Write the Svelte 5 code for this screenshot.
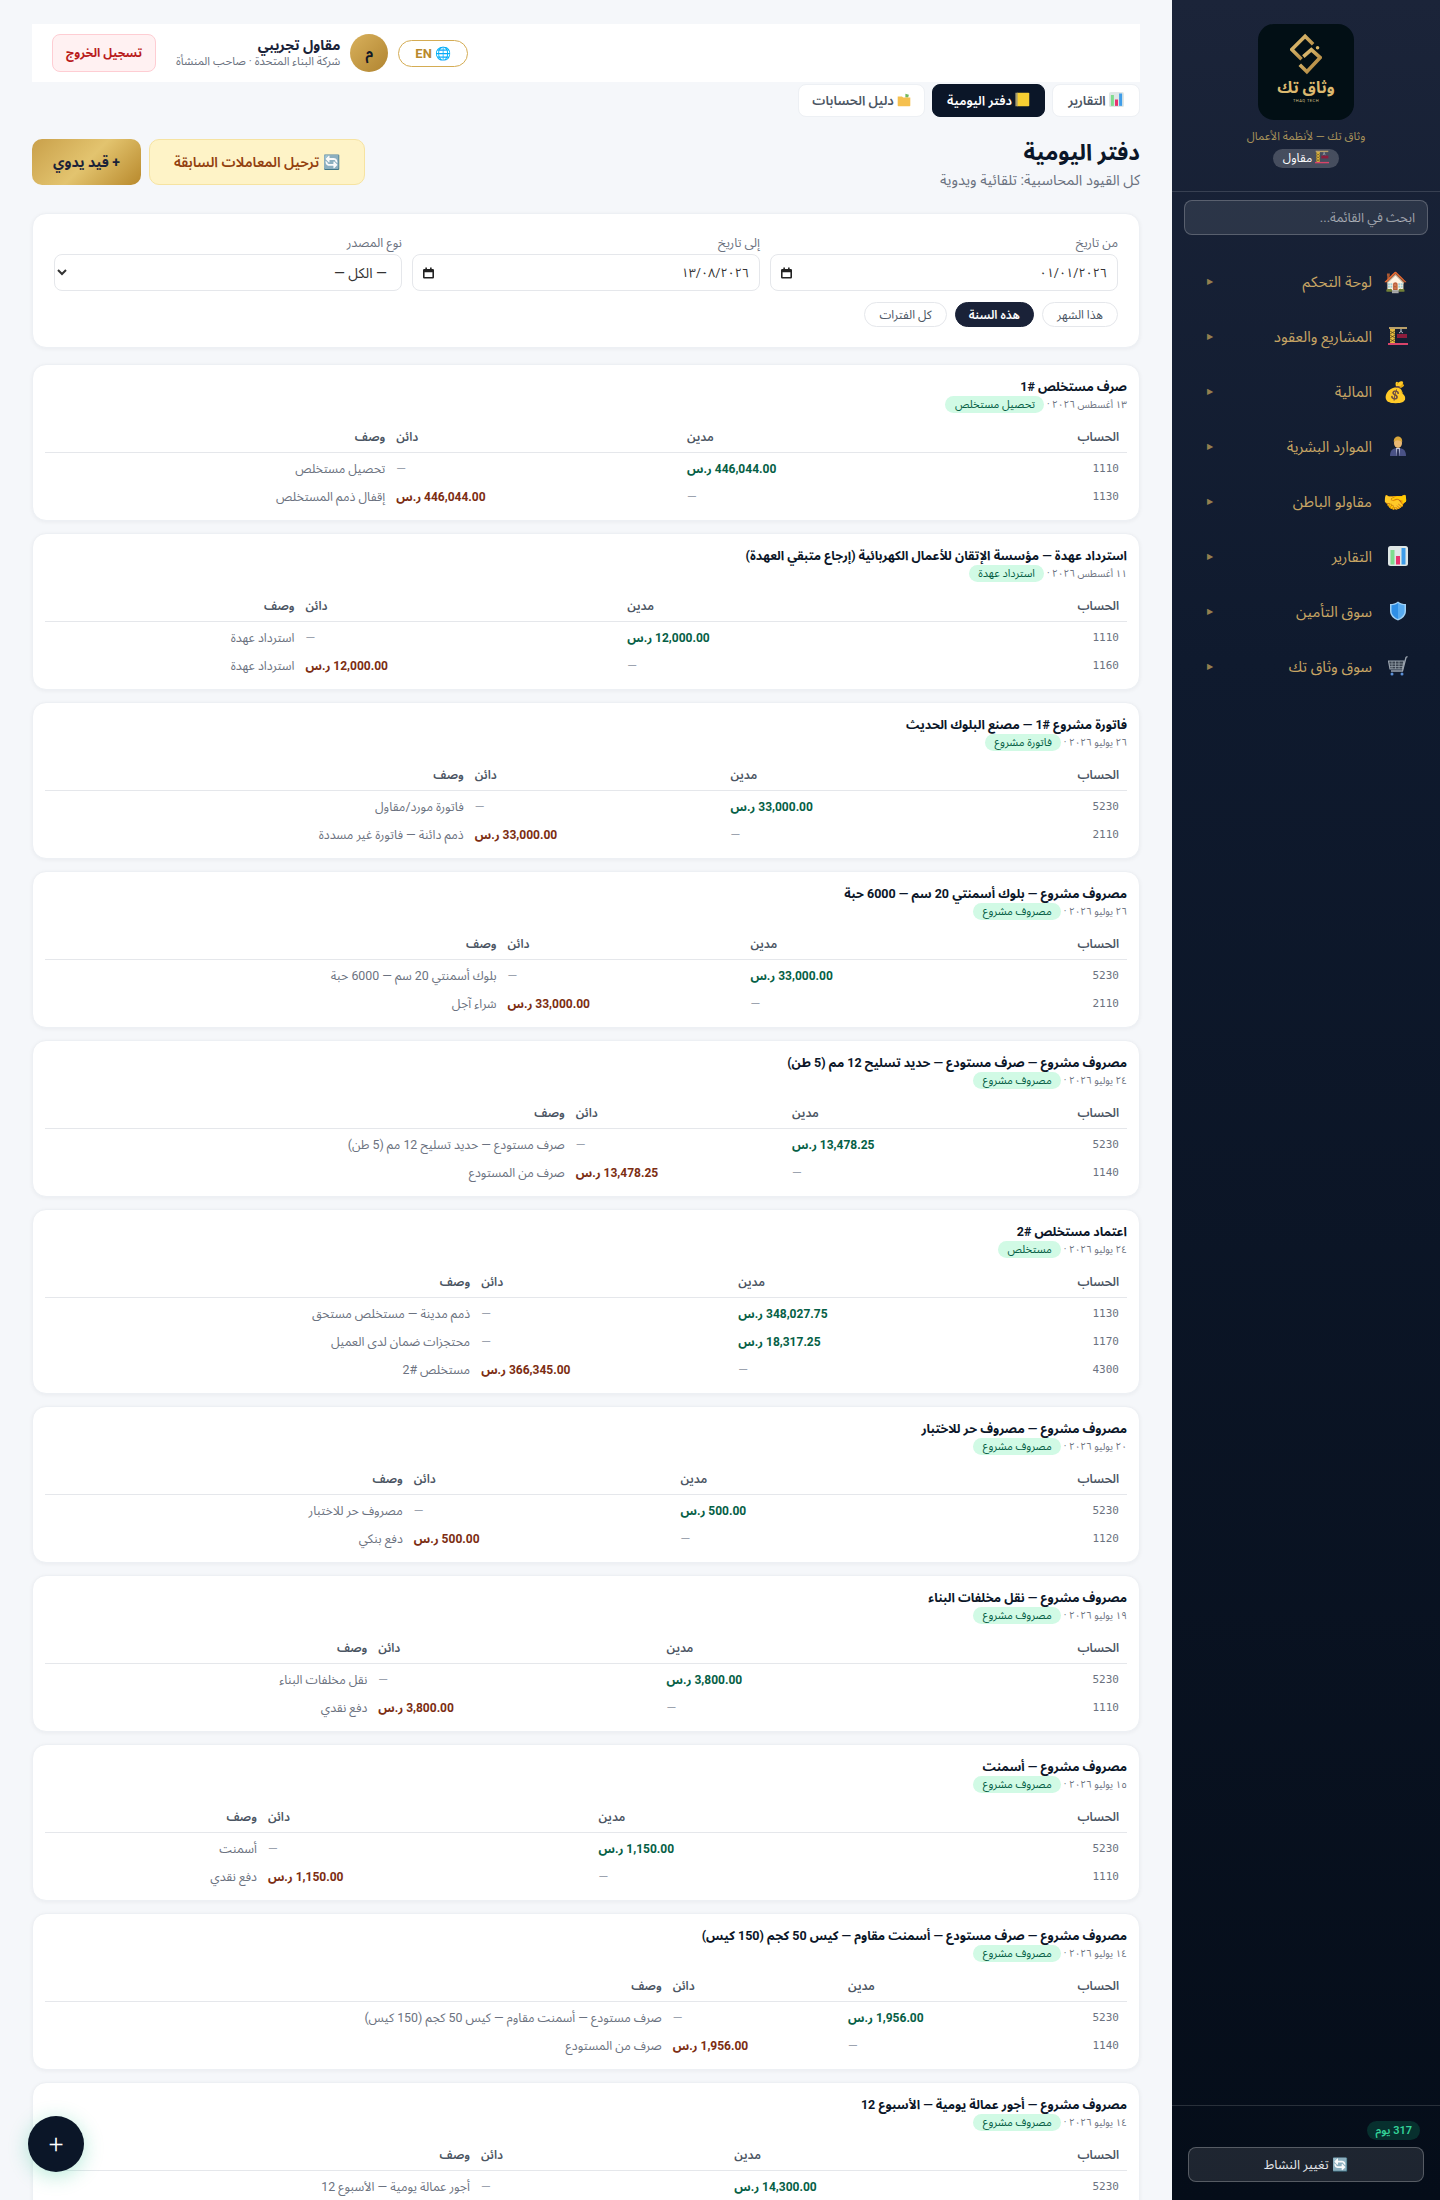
<script lang="ts">
  type Line = { acc: string; dr?: string; cr?: string; desc: string };
  type Entry = { title: string; date: string; tag: string; lines: Line[] };

  const nav = [
    ["🏠", "لوحة التحكم"],
    ["crane", "المشاريع والعقود"],
    ["💰", "المالية"],
    ["person", "الموارد البشرية"],
    ["🤝", "مقاولو الباطن"],
    ["chart", "التقارير"],
    ["shield", "سوق التأمين"],
    ["cart", "سوق وثاق تك"],
  ];

  const exp = "مصروف مشروع";
  const entries: Entry[] = [
    { title: "صرف مستخلص #1", date: "١٣ أغسطس ٢٠٢٦", tag: "تحصيل مستخلص", lines: [
      { acc: "1110", dr: "446,044.00", desc: "تحصيل مستخلص" },
      { acc: "1130", cr: "446,044.00", desc: "إقفال ذمم المستخلص" },
    ] },
    { title: "استرداد عهدة — مؤسسة الإتقان للأعمال الكهربائية (إرجاع متبقي العهدة)", date: "١١ أغسطس ٢٠٢٦", tag: "استرداد عهدة", lines: [
      { acc: "1110", dr: "12,000.00", desc: "استرداد عهدة" },
      { acc: "1160", cr: "12,000.00", desc: "استرداد عهدة" },
    ] },
    { title: "فاتورة مشروع #1 — مصنع البلوك الحديث", date: "٢٦ يوليو ٢٠٢٦", tag: "فاتورة مشروع", lines: [
      { acc: "5230", dr: "33,000.00", desc: "فاتورة مورد/مقاول" },
      { acc: "2110", cr: "33,000.00", desc: "ذمم دائنة — فاتورة غير مسددة" },
    ] },
    { title: "مصروف مشروع — بلوك أسمنتي 20 سم — 6000 حبة", date: "٢٦ يوليو ٢٠٢٦", tag: exp, lines: [
      { acc: "5230", dr: "33,000.00", desc: "بلوك أسمنتي 20 سم — 6000 حبة" },
      { acc: "2110", cr: "33,000.00", desc: "شراء آجل" },
    ] },
    { title: "مصروف مشروع — صرف مستودع — حديد تسليح 12 مم (5 طن)", date: "٢٤ يوليو ٢٠٢٦", tag: exp, lines: [
      { acc: "5230", dr: "13,478.25", desc: "صرف مستودع — حديد تسليح 12 مم (5 طن)" },
      { acc: "1140", cr: "13,478.25", desc: "صرف من المستودع" },
    ] },
    { title: "اعتماد مستخلص #2", date: "٢٤ يوليو ٢٠٢٦", tag: "مستخلص", lines: [
      { acc: "1130", dr: "348,027.75", desc: "ذمم مدينة — مستخلص مستحق" },
      { acc: "1170", dr: "18,317.25", desc: "محتجزات ضمان لدى العميل" },
      { acc: "4300", cr: "366,345.00", desc: "مستخلص #2" },
    ] },
    { title: "مصروف مشروع — مصروف حر للاختبار", date: "٢٠ يوليو ٢٠٢٦", tag: exp, lines: [
      { acc: "5230", dr: "500.00", desc: "مصروف حر للاختبار" },
      { acc: "1120", cr: "500.00", desc: "دفع بنكي" },
    ] },
    { title: "مصروف مشروع — نقل مخلفات البناء", date: "١٩ يوليو ٢٠٢٦", tag: exp, lines: [
      { acc: "5230", dr: "3,800.00", desc: "نقل مخلفات البناء" },
      { acc: "1110", cr: "3,800.00", desc: "دفع نقدي" },
    ] },
    { title: "مصروف مشروع — أسمنت", date: "١٥ يوليو ٢٠٢٦", tag: exp, lines: [
      { acc: "5230", dr: "1,150.00", desc: "أسمنت" },
      { acc: "1110", cr: "1,150.00", desc: "دفع نقدي" },
    ] },
    { title: "مصروف مشروع — صرف مستودع — أسمنت مقاوم — كيس 50 كجم (150 كيس)", date: "١٤ يوليو ٢٠٢٦", tag: exp, lines: [
      { acc: "5230", dr: "1,956.00", desc: "صرف مستودع — أسمنت مقاوم — كيس 50 كجم (150 كيس)" },
      { acc: "1140", cr: "1,956.00", desc: "صرف من المستودع" },
    ] },
    { title: "مصروف مشروع — أجور عمالة يومية — الأسبوع 12", date: "١٤ يوليو ٢٠٢٦", tag: exp, lines: [
      { acc: "5230", dr: "14,300.00", desc: "أجور عمالة يومية — الأسبوع 12" },
      { acc: "1110", cr: "14,300.00", desc: "دفع نقدي" },
    ] },
  ];
</script>

{#snippet ico(name: string, size: number)}
  {#if name === "crane"}
    <svg class="ico" width={size} height={size} viewBox="0 0 20 20">
      <rect x="1" y="1" width="18" height="2" fill="#b9a06a" />
      <rect x="2" y="3" width="5" height="14" fill="#e3b93f" />
      <path d="M2 5l5 3M7 5l-5 3M2 9l5 3M7 9l-5 3M2 13l5 3M7 13l-5 3" stroke="#5c4a1e" stroke-width="0.8" />
      <path d="M13 3v3" stroke="#aeb4bc" stroke-width="1.2" />
      <path d="M11 7l2-1.500 2 1.500" stroke="#aeb4bc" fill="none" />
      <rect x="9" y="8" width="10" height="4" fill="#8e1d3c" />
      <rect x="0" y="17" width="20" height="2" fill="#d9446a" />
    </svg>
  {:else if name === "person"}
    <svg class="ico" width={size} height={size} viewBox="0 0 20 20">
      <path d="M2 20c0-6 3-8 8-8s8 2 8 8z" fill="#4a5286" />
      <path d="M8 12h4l-.8 8H8.800z" fill="#c7cbe0" />
      <path d="M9.200 13h1.600l.4 7H8.800z" fill="#2b3157" />
      <ellipse cx="10" cy="7" rx="4" ry="5" fill="#e9b872" />
      <path d="M5.800 6C5.500 2 8 0.500 10 0.500S14.500 2 14.200 6C13 4.500 11 4.500 9.500 4.200 8 4.500 6.500 4.500 5.800 6z" fill="#d9a63b" />
    </svg>
  {:else if name === "chart"}
    <svg class="ico" width={size} height={size} viewBox="0 0 20 20">
      <rect width="20" height="20" rx="2.500" fill="#dfe7e6" />
      <rect x="2.500" y="4" width="4" height="14.500" fill="#7fdc8e" />
      <rect x="8" y="10" width="4" height="8.500" fill="#e8336f" />
      <rect x="13.500" y="2" width="4" height="16.500" fill="#3f9de9" />
    </svg>
  {:else if name === "shield"}
    <svg class="ico" width={size} height={size} viewBox="0 0 20 20">
      <path d="M10 0.500C7.500 2.500 5 3 2 3v7c0 4.500 3.500 8 8 9.500 4.500-1.500 8-5 8-9.500V3c-3 0-5.500-.5-8-2.500z" fill="#9fd0f5" />
      <path d="M10 2C8 3.500 5.500 4.200 3.500 4.200V10c0 3.800 3 6.500 6.500 8z" fill="#2f8fe6" />
      <path d="M10 2c2 1.500 4.500 2.200 6.500 2.200V10c0 3.800-3 6.500-6.500 8z" fill="#58abf0" />
    </svg>
  {:else if name === "cart"}
    <svg class="ico" width={size} height={size} viewBox="0 0 20 20" fill="none" stroke="#9aa3ae">
      <path d="M0.500 5h15.500l-1.500 8H2z" fill="#39424f" stroke-width="1.200" />
      <path d="M4 5v8M7.500 5v8M11 5v8M1 8h14.500M1.500 10.500h13.500" stroke-width="0.700" />
      <path d="M19.500 0.500l-1.500 1-3.500 13.500H3" stroke-width="1.300" />
      <circle cx="4" cy="18" r="1.500" fill="#5b8fd6" stroke="none" />
      <circle cx="14" cy="18" r="1.500" fill="#5b8fd6" stroke="none" />
    </svg>
  {:else if name === "note"}
    <svg class="ico" width={size} height={size} viewBox="0 0 20 20">
      <rect x="2" y="1" width="17" height="18" rx="1" fill="#f8cf32" />
      <rect x="0.500" y="1" width="3" height="18" fill="#a59b6f" />
    </svg>
  {:else if name === "folder"}
    <svg class="ico" width={size} height={size} viewBox="0 0 20 20">
      <path d="M12 1l5 1.500-1 4h-4z" fill="#76b85b" />
      <path d="M1 5h6l2 1.500h10V18a1 1 0 0 1-1 1H2a1 1 0 0 1-1-1z" fill="#f5c04f" />
    </svg>
  {:else}
    <span>{name}</span>
  {/if}
{/snippet}

<div class="app" dir="rtl">
  <aside class="side">
    <div class="brand">
      <div class="logo">
        <svg width="32" height="42" viewBox="0 0 36 44" fill="none" stroke="url(#g)" stroke-width="4">
          <defs>
            <linearGradient id="g" x1="0" y1="0" x2="1" y2="1">
              <stop offset="0" stop-color="#e6c67a" />
              <stop offset="1" stop-color="#a87c35" />
            </linearGradient>
          </defs>
          <path d="M26 11 L17 2 L2 17 L13 28" />
          <path d="M11 34 L19 42 L34 26 L24 17 L15 25" />
          <circle cx="31" cy="15" r="2" fill="#d9b566" stroke="none" />
        </svg>
        <span class="logo-name">وثاق تك</span>
        <span class="logo-en">THAQ TECH</span>
      </div>
      <div class="tagline">وثاق تك — لأنظمة الأعمال</div>
      <div class="role">{@render ico("crane", 14)} مقاول</div>
    </div>
    <div class="search-wrap"><input class="search" placeholder="ابحث في القائمة..." /></div>
    <nav class="nav">
      {#each nav as [icon, label]}
        <div class="nav-item">
          <span class="nav-icon">{@render ico(icon, 20)}</span>
          <span class="nav-label">{label}</span>
          <span class="nav-arrow">▶</span>
        </div>
      {/each}
    </nav>
    <div class="side-foot">
      <div class="days-row"><span class="days">317 يوم</span></div>
      <button class="switch">🔄 تغيير النشاط</button>
    </div>
  </aside>

  <main class="main">
    <header class="topbar">
      <button class="lang">🌐 EN</button>
      <div class="avatar">م</div>
      <div class="who">
        <div class="who-name">مقاول تجريبي</div>
        <div class="who-sub">شركة البناء المتحدة · صاحب المنشأة</div>
      </div>
      <button class="logout">تسجيل الخروج</button>
    </header>

    <div class="tabs">
      <button class="tab">{@render ico("chart", 15)} التقارير</button>
      <button class="tab active">{@render ico("note", 15)} دفتر اليومية</button>
      <button class="tab narrow">{@render ico("folder", 14)} دليل الحسابات</button>
    </div>

    <div class="page-head">
      <div>
        <h1>دفتر اليومية</h1>
        <p>كل القيود المحاسبية: تلقائية ويدوية</p>
      </div>
      <div class="actions">
        <button class="btn-soft">🔄 ترحيل المعاملات السابقة</button>
        <button class="btn-gold">+ قيد يدوي</button>
      </div>
    </div>

    <section class="card filters">
      <div class="filter-grid">
        <div class="field">
          <span class="flabel">من تاريخ</span>
          <div class="input">
            <span class="date">٠١/٠١/٢٠٢٦</span>
            <svg width="11" height="12" viewBox="0 0 14 14"><path d="M3 0h2v2h4V0h2v2h1.5A1.5 1.5 0 0 1 14 3.5v9a1.5 1.5 0 0 1-1.5 1.5h-11A1.5 1.5 0 0 1 0 12.500v-9A1.500 1.500 0 0 1 1.500 2H3zM2 6v6h10V6z" fill="#222" /></svg>
          </div>
        </div>
        <div class="field">
          <span class="flabel">إلى تاريخ</span>
          <div class="input">
            <span class="date">١٣/٠٨/٢٠٢٦</span>
            <svg width="11" height="12" viewBox="0 0 14 14"><path d="M3 0h2v2h4V0h2v2h1.5A1.5 1.5 0 0 1 14 3.5v9a1.5 1.5 0 0 1-1.5 1.5h-11A1.5 1.5 0 0 1 0 12.500v-9A1.500 1.500 0 0 1 1.500 2H3zM2 6v6h10V6z" fill="#222" /></svg>
          </div>
        </div>
        <div class="field">
          <span class="flabel">نوع المصدر</span>
          <select class="input"><option>— الكل —</option></select>
        </div>
      </div>
      <div class="chips">
        <button class="chip">هذا الشهر</button>
        <button class="chip on">هذه السنة</button>
        <button class="chip">كل الفترات</button>
      </div>
    </section>

    {#each entries as e}
      <section class="card entry">
        <div class="e-title">{e.title}</div>
        <div class="e-sub">{e.date} · <span class="tag">{e.tag}</span></div>
        <table>
          <thead>
            <tr><th>الحساب</th><th class="num">مدين</th><th class="num">دائن</th><th>وصف</th></tr>
          </thead>
          <tbody>
            {#each e.lines as l}
              <tr>
                <td class="acc">{l.acc}</td>
                <td class="num">{#if l.dr}<b class="dr">{l.dr} ر.س</b>{:else}<span class="dash">—</span>{/if}</td>
                <td class="num">{#if l.cr}<b class="cr">{l.cr} ر.س</b>{:else}<span class="dash">—</span>{/if}</td>
                <td>{l.desc}</td>
              </tr>
            {/each}
          </tbody>
        </table>
      </section>
    {/each}
  </main>

  <button class="fab">+</button>
</div>

<style>
  :global(body) {
    margin: 0;
    background: #f5f7fa;
    font-family: Roboto, "Noto Sans Arabic", sans-serif;
  }
  button, input, select {
    font-family: inherit;
  }
  .ico {
    display: inline-block;
    vertical-align: -2px;
  }
  .app {
    display: flex;
    height: 100vh;
    overflow: hidden;
    position: relative;
  }
  .side {
    width: 268px;
    flex: none;
    display: flex;
    flex-direction: column;
    background: linear-gradient(180deg, #1b2439 0%, #0f1a2e 30%, #050d19 100%);
  }
  .brand {
    padding: 24px 0;
    height: 192px;
    box-sizing: border-box;
    border-bottom: 1px solid rgba(255, 255, 255, 0.14);
    display: flex;
    flex-direction: column;
    align-items: center;
  }
  .logo {
    width: 96px;
    height: 96px;
    flex: none;
    border-radius: 16px;
    background: #020f15;
    display: flex;
    flex-direction: column;
    align-items: center;
    padding-top: 9px;
    box-sizing: border-box;
  }
  .logo-name {
    font-size: 16px;
    line-height: 20px;
    font-weight: 700;
    color: #dcb96f;
    margin-top: 3px;
  }
  .logo-en {
    font-size: 4px;
    line-height: 6px;
    letter-spacing: 0.5px;
    color: #d8c08a;
  }
  .tagline {
    margin-top: 8px;
    font-size: 11.5px;
    line-height: 16px;
    color: #a8925a;
  }
  .role {
    margin-top: 5px;
    height: 19px;
    line-height: 19px;
    padding: 0 10px;
    border-radius: 10px;
    background: rgba(255, 255, 255, 0.2);
    color: #fff;
    font-size: 12px;
  }
  .search-wrap {
    padding: 8px 12px;
  }
  .search {
    display: block;
    width: 100%;
    box-sizing: border-box;
    height: 35px;
    padding: 0 12px;
    border-radius: 8px;
    border: 1px solid rgba(255, 255, 255, 0.22);
    background: rgba(255, 255, 255, 0.09);
    font-size: 13px;
    color: #fff;
  }
  .search::placeholder {
    color: rgba(255, 255, 255, 0.55);
  }
  .nav {
    flex: 1;
    padding-top: 11px;
  }
  .nav-item {
    height: 55px;
    display: flex;
    align-items: center;
    padding: 0 32px 0 35px;
    gap: 16px;
    color: #c7a564;
    font-size: 15px;
  }
  .nav-icon {
    width: 20px;
    font-size: 20px;
    line-height: 20px;
    text-align: center;
  }
  .nav-label {
    flex: 1;
  }
  .nav-arrow {
    font-size: 8px;
    color: #94804f;
  }
  .side-foot {
    border-top: 1px solid rgba(255, 255, 255, 0.14);
    padding: 15px 16px 18px;
  }
  .days-row {
    display: flex;
    padding-right: 4px;
    margin-bottom: 7px;
  }
  .days {
    padding: 0 8px;
    height: 19px;
    line-height: 19px;
    border-radius: 10px;
    background: rgba(16, 185, 129, 0.2);
    color: #34d399;
    font-size: 11px;
    font-weight: 600;
  }
  .switch {
    width: 100%;
    height: 35px;
    border-radius: 8px;
    border: 1px solid rgba(255, 255, 255, 0.25);
    background: rgba(255, 255, 255, 0.1);
    color: #e5e7eb;
    font-size: 13px;
  }
  .main {
    flex: 1;
    min-width: 0;
    padding: 24px 32px 0;
    overflow: hidden;
  }
  .topbar {
    height: 58px;
    background: #fff;
    display: flex;
    align-items: center;
    justify-content: flex-end;
    padding: 0 20px;
    gap: 10px;
    box-sizing: border-box;
  }
  .lang {
    height: 27px;
    padding: 0 16px;
    border: 1px solid #d4ac54;
    border-radius: 14px;
    background: #fff;
    color: #b8892c;
    font-weight: 700;
    font-size: 13px;
  }
  .avatar {
    width: 38px;
    height: 38px;
    border-radius: 50%;
    background: linear-gradient(135deg, #d9b15c, #b08430);
    color: #111827;
    font-weight: 700;
    font-size: 14px;
    display: flex;
    align-items: center;
    justify-content: center;
  }
  .who {
    margin-left: 10px;
  }
  .who-name {
    font-size: 14px;
    font-weight: 700;
    color: #1a2238;
    line-height: 17px;
  }
  .who-sub {
    font-size: 11.5px;
    color: #6b7280;
    line-height: 15px;
  }
  .logout {
    height: 38px;
    width: 104px;
    padding: 0;
    border-radius: 8px;
    border: 1px solid #fecdd3;
    background: #fff1f2;
    color: #b91c1c;
    font-weight: 700;
    font-size: 12px;
  }
  .tabs {
    display: flex;
    gap: 7px;
    margin-top: 2px;
  }
  .tab {
    height: 33px;
    padding: 0 15px;
    border-radius: 8px;
    border: 1px solid #edf0f4;
    background: #fff;
    color: #4b5563;
    font-size: 13px;
    font-weight: 600;
  }
  .tab.narrow {
    padding: 0 13px;
  }
  .tab.active {
    padding: 0 14px;
    background: #0b1628;
    color: #fff;
    border-color: #0b1628;
  }
  .page-head {
    display: flex;
    justify-content: space-between;
    align-items: flex-start;
    margin-top: 22px;
    height: 74px;
  }
  h1 {
    margin: 0;
    font-size: 22.5px;
    line-height: 26px;
    color: #0b1628;
    font-weight: 700;
  }
  .page-head p {
    margin: 6px 0 0;
    font-size: 14.6px;
    line-height: 18px;
    color: #6b7280;
  }
  .actions {
    display: flex;
    gap: 8px;
  }
  .btn-soft {
    height: 46px;
    padding: 0 24px;
    border-radius: 10px;
    border: 1px solid #f6e3a1;
    background: #fef3c7;
    color: #92400e;
    font-size: 14px;
    font-weight: 600;
  }
  .btn-gold {
    height: 46px;
    padding: 0 21px;
    border: 0;
    border-radius: 10px;
    background: linear-gradient(135deg, #c9a04a, #e3c46f 50%, #b8892c);
    color: #1a2238;
    font-size: 14px;
    font-weight: 700;
  }
  .card {
    background: #fff;
    border: 1px solid #edf0f4;
    border-radius: 14px;
    box-shadow: 0 1px 4px rgba(15, 23, 42, 0.05);
    box-sizing: border-box;
  }
  .filters {
    height: 135px;
    padding: 21px;
    margin-bottom: 16px;
  }
  .filter-grid {
    display: grid;
    grid-template-columns: repeat(3, 1fr);
    gap: 10px;
  }
  .field {
    display: flex;
    flex-direction: column;
    gap: 3px;
  }
  .flabel {
    font-size: 12.5px;
    line-height: 16px;
    color: #6b7280;
  }
  .input {
    height: 37px;
    box-sizing: border-box;
    border: 1px solid #e5e7eb;
    border-radius: 8px;
    background: #fff;
    padding: 0 10px;
    display: flex;
    align-items: center;
    justify-content: space-between;
    font-size: 14px;
    color: #333;
  }
  .date {
    font-size: 12.5px;
    letter-spacing: -1px;
  }
  .chips {
    display: flex;
    gap: 8px;
    margin-top: 11px;
  }
  .chip {
    height: 25px;
    padding: 0 14px;
    border-radius: 13px;
    border: 1px solid #e5e7eb;
    background: #fff;
    color: #4b5563;
    font-size: 12px;
  }
  .chip.on {
    padding: 0 13px;
    background: #1a2238;
    border-color: #1a2238;
    color: #fff;
    font-weight: 600;
  }
  .entry {
    padding: 13px 12px 11px;
    margin-bottom: 12px;
  }
  .e-title {
    font-size: 12.5px;
    font-weight: 700;
    line-height: 18px;
    color: #0b1628;
  }
  .e-sub {
    font-size: 10px;
    line-height: 17px;
    color: #6b7280;
  }
  .tag {
    display: inline-block;
    padding: 0 9.5px;
    border-radius: 9px;
    background: #d1fae5;
    color: #065f46;
    font-size: 11px;
    line-height: 17px;
  }
  table {
    width: 100%;
    border-collapse: collapse;
    margin-top: 10px;
    font-size: 12.4px;
  }
  th {
    padding: 6px 8px 6px 3px;
    font-size: 12px;
    font-weight: 600;
    color: #4b5563;
    text-align: right;
    border-bottom: 1px solid #e5e7eb;
    line-height: 17px;
  }
  td {
    padding: 7px 8px 3px 3px;
    line-height: 18px;
    color: #6b7280;
    text-align: right;
  }
  th.num, td.num {
    text-align: left;
  }
  td.acc {
    font-family: "DejaVu Sans Mono", monospace;
    font-size: 11px;
  }
  .dr {
    color: #065f46;
    font-weight: 700;
    font-size: 12px;
  }
  .cr {
    color: #7c2d12;
    font-weight: 700;
    font-size: 12px;
  }
  .dash {
    color: #9ca3af;
  }
  .fab {
    position: absolute;
    left: 28px;
    bottom: 28px;
    width: 56px;
    height: 56px;
    border-radius: 50%;
    border: 0;
    background: #0b1628;
    color: #fff;
    font-size: 26px;
    font-weight: 300;
    box-shadow: 0 4px 20px rgba(16, 185, 129, 0.3);
  }
</style>
